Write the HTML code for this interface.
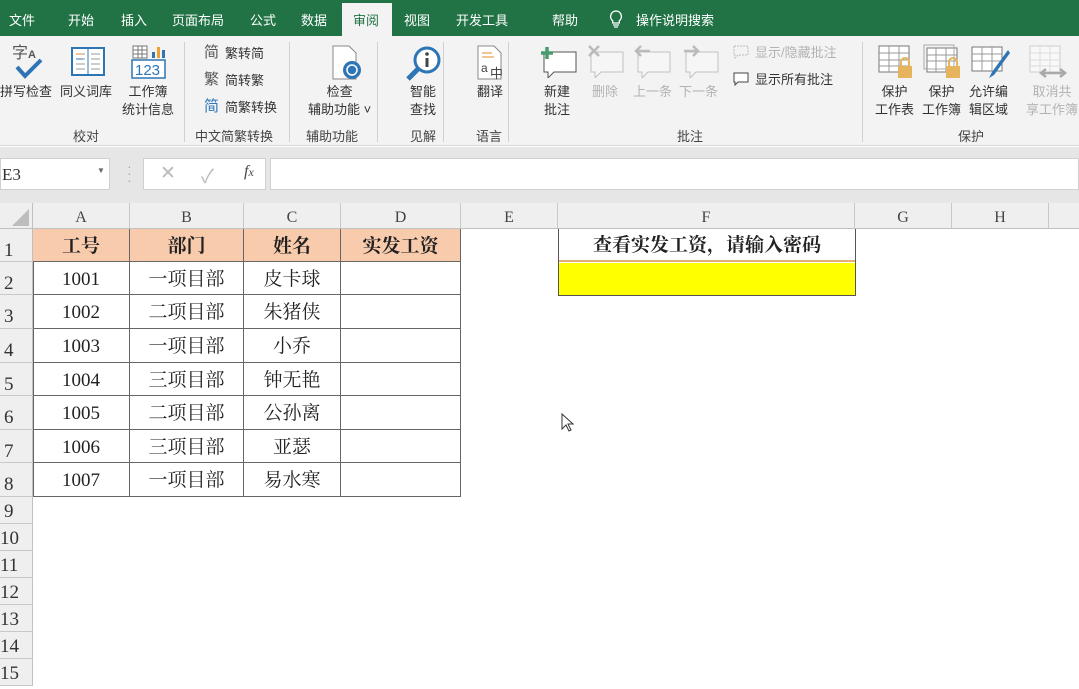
<!DOCTYPE html>
<html><head><meta charset="utf-8"><style>
*{margin:0;padding:0;box-sizing:border-box}
body{width:1079px;height:676px;overflow:hidden;background:#fff;position:relative;font-family:"Liberation Sans","Noto Sans CJK SC",sans-serif;font-size:13px;color:#262626}
.a{position:absolute}
.tab{position:absolute;top:10px;color:#fff;font-size:13px}
.rl{position:absolute;font-size:13px;color:#333;text-align:center;line-height:18px;white-space:nowrap}
.gl{position:absolute;top:126px;font-size:13px;color:#444}
.sep{position:absolute;top:42px;width:1px;height:100px;background:#d0d0d0}
.dis{color:#b3b3b3}
.ch{position:absolute;top:203px;height:26px;background:#efefef;border-right:1px solid #c8c8c8;border-bottom:1px solid #c0c0c0;text-align:center;line-height:30px;font-family:"Liberation Serif",serif;font-size:16px;color:#444}
.rh{position:absolute;left:0;width:33px;background:#efefef;border-bottom:1px solid #c8c8c8;border-right:1px solid #c0c0c0;font-family:"Liberation Serif",serif;font-size:19px;color:#333;padding-left:4px}
.c{position:absolute;text-align:center;font-family:"Liberation Serif","Noto Serif CJK SC",serif;font-size:19px;color:#222;border-right:1px solid #666;border-bottom:1px solid #666;padding-top:2px}
.h{background:#f8cbad;font-weight:bold}
</style></head><body>
<div class="a" style="left:0;top:0;width:1079px;height:36px;background:#217346"></div>
<div class="a" style="left:342px;top:3px;width:50px;height:34px;background:#f3f3f3"></div>
<div class="tab" style="left:9px">文件</div>
<div class="tab" style="left:68px">开始</div>
<div class="tab" style="left:121px">插入</div>
<div class="tab" style="left:172px">页面布局</div>
<div class="tab" style="left:250px">公式</div>
<div class="tab" style="left:301px">数据</div>
<div class="tab" style="left:353px;color:#217346">审阅</div>
<div class="tab" style="left:404px">视图</div>
<div class="tab" style="left:456px">开发工具</div>
<div class="tab" style="left:552px">帮助</div>
<svg class="a" style="left:608px;top:9px" width="16" height="20"><path d="M8 2a5.5 5.5 0 0 0-3.3 9.8V14h6.6v-2.2A5.5 5.5 0 0 0 8 2zM5 16h6M6 18h4" fill="none" stroke="#fff" stroke-width="1.3"/></svg>
<div class="tab" style="left:636px">操作说明搜索</div>
<div class="a" style="left:0;top:36px;width:1079px;height:110px;background:#f3f3f3;border-bottom:1px solid #d6d6d6"></div>
<!-- proofing -->
<div class="a" style="left:12px;top:39px;font-size:16px;color:#555">字<span style="font-size:11px;font-weight:bold">A</span></div>
<svg class="a" style="left:14px;top:57px" width="30" height="24"><path d="M3 10l8 9L27 3" fill="none" stroke="#2e75b6" stroke-width="4"/></svg>
<svg class="a" style="left:70px;top:46px" width="36" height="32"><rect x="2" y="2" width="32" height="27" fill="#fff" stroke="#2e75b6" stroke-width="2"/><line x1="18" y1="3" x2="18" y2="29" stroke="#2e75b6"/><path d="M6 8h9M6 13h9M6 18h9M6 23h9M21 8h9M21 13h9M21 18h9M21 23h9" stroke="#999"/><path d="M6 8h7" stroke="#e38b2b"/><path d="M6 13h7" stroke="#2e75b6"/></svg>
<svg class="a" style="left:130px;top:44px" width="38" height="36"><rect x="3" y="2" width="14" height="12" fill="#fff" stroke="#777"/><path d="M3 6h14M3 10h14M8 2v12M12 2v12" stroke="#777"/><rect x="22" y="8" width="3" height="6" fill="#2e75b6"/><rect x="27" y="3" width="3" height="11" fill="#f0a030"/><rect x="32" y="6" width="3" height="8" fill="#2e75b6"/><rect x="2" y="16" width="33" height="18" fill="#fff" stroke="#2e75b6" stroke-width="1.5"/><text x="5" y="31" font-size="15" fill="#2e75b6" font-family="Liberation Sans">123</text></svg>
<div class="rl" style="left:0;top:83px">拼写检查</div>
<div class="rl" style="left:60px;top:83px">同义词库</div>
<div class="rl" style="left:122px;top:83px">工作簿<br>统计信息</div>
<div class="gl" style="left:73px">校对</div>
<div class="sep" style="left:184px"></div>
<div class="rl" style="left:204px;top:44px;font-size:15px;color:#555">简</div>
<div class="rl" style="left:204px;top:71px;font-size:15px;color:#555">繁</div>
<div class="rl" style="left:204px;top:98px;font-size:15px;color:#2e75b6">简</div>
<div class="rl" style="left:225px;top:45px">繁转简</div>
<div class="rl" style="left:225px;top:72px">简转繁</div>
<div class="rl" style="left:225px;top:99px">简繁转换</div>
<div class="gl" style="left:195px">中文简繁转换</div>
<div class="sep" style="left:289px"></div>
<svg class="a" style="left:330px;top:44px" width="36" height="38"><path d="M3 2h16l7 7v26H3z" fill="#fff" stroke="#888"/><circle cx="22" cy="26" r="9" fill="#2e75b6"/><circle cx="22" cy="26" r="5" fill="none" stroke="#fff" stroke-width="1.5"/></svg>
<div class="rl" style="left:308px;top:83px">检查<br>辅助功能 ˅</div>
<div class="gl" style="left:306px">辅助功能</div>
<div class="sep" style="left:377px"></div>
<svg class="a" style="left:404px;top:44px" width="40" height="38"><circle cx="23" cy="16" r="12" fill="#fff" stroke="#2e75b6" stroke-width="3"/><path d="M14 25L4 35" stroke="#2e75b6" stroke-width="5"/><rect x="21.5" y="14" width="3" height="9" fill="#444"/><circle cx="23" cy="10" r="1.8" fill="#444"/></svg>
<div class="rl" style="left:410px;top:83px">智能<br>查找</div>
<div class="gl" style="left:410px">见解</div>
<div class="sep" style="left:443px"></div>
<svg class="a" style="left:475px;top:44px" width="36" height="38"><path d="M3 2h16l7 7v26H3z" fill="#fff" stroke="#888"/><path d="M7 9h10M7 13h12" stroke="#e38b2b"/><text x="6" y="28" font-size="12" fill="#444">a</text><text x="15" y="34" font-size="13" fill="#444" font-family="Noto Sans CJK SC">中</text></svg>
<div class="rl" style="left:477px;top:83px">翻译</div>
<div class="gl" style="left:476px">语言</div>
<div class="sep" style="left:508px"></div>
<!-- comments -->
<svg class="a" style="left:540px;top:44px" width="38" height="34"><path d="M4 8h32v20H14l-6 6v-6H4z" fill="#fff" stroke="#555"/><path d="M7 3v12M1 9h12" stroke="#4a9a70" stroke-width="3.5"/></svg>
<svg class="a" style="left:587px;top:44px" width="38" height="34"><path d="M4 8h32v20H14l-6 6v-6H4z" fill="#f6f6f6" stroke="#c0c0c0"/><path d="M2 2l10 10M12 2L2 12" stroke="#bbb" stroke-width="2.5"/></svg>
<svg class="a" style="left:634px;top:44px" width="38" height="34"><path d="M4 8h32v20H14l-6 6v-6H4z" fill="#f6f6f6" stroke="#c0c0c0"/><path d="M2 7h14M7 2L2 7l5 5" fill="none" stroke="#bbb" stroke-width="2.5"/></svg>
<svg class="a" style="left:682px;top:44px" width="38" height="34"><path d="M4 8h32v20H14l-6 6v-6H4z" fill="#f6f6f6" stroke="#c0c0c0"/><path d="M2 7h14M11 2l5 5-5 5" fill="none" stroke="#bbb" stroke-width="2.5"/></svg>
<div class="rl" style="left:544px;top:83px">新建<br>批注</div>
<div class="rl dis" style="left:592px;top:83px">删除</div>
<div class="rl dis" style="left:633px;top:83px">上一条</div>
<div class="rl dis" style="left:679px;top:83px">下一条</div>
<svg class="a" style="left:733px;top:45px" width="16" height="14"><path d="M1 1h14v9H5l-3 3v-3H1z" fill="none" stroke="#bbb" stroke-dasharray="2 1"/></svg>
<div class="rl dis" style="left:755px;top:44px">显示/隐藏批注</div>
<svg class="a" style="left:733px;top:72px" width="16" height="14"><path d="M1 1h14v9H5l-3 3v-3H1z" fill="#fff" stroke="#444"/></svg>
<div class="rl" style="left:755px;top:71px">显示所有批注</div>
<div class="gl" style="left:677px">批注</div>
<div class="sep" style="left:862px"></div>
<!-- protect -->
<svg class="a" style="left:876px;top:44px" width="44" height="38"><rect x="3" y="2" width="30" height="26" fill="#fff" stroke="#777"/><path d="M3 9h30M3 16h30M3 22h30M13 2v26M23 2v26" stroke="#999"/><rect x="22" y="22" width="14" height="12" fill="#e6b45c"/><path d="M25 22v-4a4 4 0 0 1 8 0v4" fill="none" stroke="#e6b45c" stroke-width="2"/></svg>
<svg class="a" style="left:922px;top:44px" width="44" height="38"><rect x="5" y="4" width="30" height="24" fill="#fff" stroke="#777"/><rect x="2" y="1" width="30" height="24" fill="none" stroke="#aaa"/><path d="M5 11h30M5 17h30M14 4v24M24 4v24" stroke="#999"/><rect x="24" y="22" width="14" height="12" fill="#e6b45c"/><path d="M27 22v-4a4 4 0 0 1 8 0v4" fill="none" stroke="#e6b45c" stroke-width="2"/></svg>
<svg class="a" style="left:970px;top:44px" width="44" height="38"><rect x="2" y="3" width="30" height="24" fill="#fff" stroke="#777"/><path d="M2 10h30M2 17h30M12 3v24M22 3v24" stroke="#999"/><path d="M38 6L22 28l-3 6 5-3 16-22z" fill="#2e75b6"/></svg>
<svg class="a" style="left:1026px;top:44px" width="44" height="38"><rect x="4" y="2" width="30" height="26" fill="#f8f8f8" stroke="#ccc"/><path d="M4 9h30M4 16h30M4 22h30M14 2v26M24 2v26" stroke="#ddd"/><path d="M16 29h22M20 25l-5 4 5 4M34 25l5 4-5 4" fill="none" stroke="#aaa" stroke-width="2.5"/></svg>
<div class="rl" style="left:875px;top:83px">保护<br>工作表</div>
<div class="rl" style="left:922px;top:83px">保护<br>工作簿</div>
<div class="rl" style="left:969px;top:83px">允许编<br>辑区域</div>
<div class="rl dis" style="left:1026px;top:83px">取消共<br>享工作簿</div>
<div class="gl" style="left:958px">保护</div>
<!-- formula bar -->
<div class="a" style="left:0;top:147px;width:1079px;height:56px;background:#e6e6e6"></div>
<div class="a" style="left:0;top:158px;width:110px;height:32px;background:#fff;border:1px solid #d0d0d0;font-family:'Liberation Serif',serif;font-size:17px;line-height:32px;padding-left:1px;color:#333">E3</div>
<div class="a" style="left:97px;top:166px;font-size:8px;color:#666">▼</div>
<div class="a" style="left:127px;top:163px;font-size:14px;color:#aaa;line-height:7px">·<br>·<br>·</div>
<div class="a" style="left:143px;top:158px;width:123px;height:32px;background:#fff;border:1px solid #d0d0d0"></div>
<div class="a" style="left:160px;top:162px;font-size:19px;color:#bbb">✕</div>
<div class="a" style="left:201px;top:162px;font-size:19px;color:#bbb">✓</div>
<div class="a" style="left:244px;top:163px;font-family:'Liberation Serif',serif;font-style:italic;font-size:16px;color:#444">f<span style="font-size:12px">x</span></div>
<div class="a" style="left:270px;top:158px;width:809px;height:32px;background:#fff;border:1px solid #d0d0d0"></div>
<!-- column headers -->
<div class="a" style="left:0;top:203px;width:33px;height:26px;background:#efefef;border-right:1px solid #c0c0c0;border-bottom:1px solid #c0c0c0"></div>
<svg class="a" style="left:10px;top:207px" width="20" height="20"><path d="M19 2V19H2z" fill="#bdbdbd"/></svg>
<div class="ch" style="left:33px;width:97px">A</div>
<div class="ch" style="left:130px;width:114px">B</div>
<div class="ch" style="left:244px;width:97px">C</div>
<div class="ch" style="left:341px;width:120px">D</div>
<div class="ch" style="left:461px;width:97px">E</div>
<div class="ch" style="left:558px;width:297px">F</div>
<div class="ch" style="left:855px;width:97px">G</div>
<div class="ch" style="left:952px;width:97px">H</div>
<div class="ch" style="left:1049px;width:40px"></div>
<!-- row headers -->
<div class="rh" style="top:229px;height:33px;line-height:44px">1</div>
<div class="rh" style="top:262px;height:33px;line-height:44px">2</div>
<div class="rh" style="top:295px;height:34px;line-height:44px">3</div>
<div class="rh" style="top:329px;height:34px;line-height:44px">4</div>
<div class="rh" style="top:363px;height:33px;line-height:44px">5</div>
<div class="rh" style="top:396px;height:34px;line-height:44px">6</div>
<div class="rh" style="top:430px;height:33px;line-height:44px">7</div>
<div class="rh" style="top:463px;height:34px;line-height:44px">8</div>
<div class="rh" style="top:497px;height:27px;line-height:30px">9</div>
<div class="rh" style="top:524px;height:27px;line-height:30px;padding-left:0">10</div>
<div class="rh" style="top:551px;height:27px;line-height:30px;padding-left:0">11</div>
<div class="rh" style="top:578px;height:27px;line-height:30px;padding-left:0">12</div>
<div class="rh" style="top:605px;height:27px;line-height:30px;padding-left:0">13</div>
<div class="rh" style="top:632px;height:27px;line-height:30px;padding-left:0">14</div>
<div class="rh" style="top:659px;height:27px;line-height:30px;padding-left:0">15</div>
<!-- table -->
<div class="a" style="left:33px;top:262px;width:1px;height:235px;background:#666"></div>
<div class="c h" style="left:33px;top:229px;width:97px;height:33px;line-height:31px">工号</div>
<div class="c h" style="left:130px;top:229px;width:114px;height:33px;line-height:31px">部门</div>
<div class="c h" style="left:244px;top:229px;width:97px;height:33px;line-height:31px">姓名</div>
<div class="c h" style="left:341px;top:229px;width:120px;height:33px;line-height:31px">实发工资</div>
<div class="c" style="left:33px;top:262px;width:97px;height:33px;line-height:31px">1001</div><div class="c" style="left:130px;top:262px;width:114px;height:33px;line-height:31px">一项目部</div><div class="c" style="left:244px;top:262px;width:97px;height:33px;line-height:31px">皮卡球</div><div class="c" style="left:341px;top:262px;width:120px;height:33px"></div>
<div class="c" style="left:33px;top:295px;width:97px;height:34px;line-height:32px">1002</div><div class="c" style="left:130px;top:295px;width:114px;height:34px;line-height:32px">二项目部</div><div class="c" style="left:244px;top:295px;width:97px;height:34px;line-height:32px">朱猪侠</div><div class="c" style="left:341px;top:295px;width:120px;height:34px"></div>
<div class="c" style="left:33px;top:329px;width:97px;height:34px;line-height:32px">1003</div><div class="c" style="left:130px;top:329px;width:114px;height:34px;line-height:32px">一项目部</div><div class="c" style="left:244px;top:329px;width:97px;height:34px;line-height:32px">小乔</div><div class="c" style="left:341px;top:329px;width:120px;height:34px"></div>
<div class="c" style="left:33px;top:363px;width:97px;height:33px;line-height:31px">1004</div><div class="c" style="left:130px;top:363px;width:114px;height:33px;line-height:31px">三项目部</div><div class="c" style="left:244px;top:363px;width:97px;height:33px;line-height:31px">钟无艳</div><div class="c" style="left:341px;top:363px;width:120px;height:33px"></div>
<div class="c" style="left:33px;top:396px;width:97px;height:34px;line-height:32px">1005</div><div class="c" style="left:130px;top:396px;width:114px;height:34px;line-height:32px">二项目部</div><div class="c" style="left:244px;top:396px;width:97px;height:34px;line-height:32px">公孙离</div><div class="c" style="left:341px;top:396px;width:120px;height:34px"></div>
<div class="c" style="left:33px;top:430px;width:97px;height:33px;line-height:31px">1006</div><div class="c" style="left:130px;top:430px;width:114px;height:33px;line-height:31px">三项目部</div><div class="c" style="left:244px;top:430px;width:97px;height:33px;line-height:31px">亚瑟</div><div class="c" style="left:341px;top:430px;width:120px;height:33px"></div>
<div class="c" style="left:33px;top:463px;width:97px;height:34px;line-height:32px">1007</div><div class="c" style="left:130px;top:463px;width:114px;height:34px;line-height:32px">一项目部</div><div class="c" style="left:244px;top:463px;width:97px;height:34px;line-height:32px">易水寒</div><div class="c" style="left:341px;top:463px;width:120px;height:34px"></div>
<!-- F box -->
<div class="a" style="left:558px;top:229px;width:298px;height:67px;border:1px solid #555;border-top:none"></div>
<div class="a" style="left:559px;top:229px;width:296px;height:33px;line-height:33px;text-align:center;font-family:'Liberation Serif','Noto Serif CJK SC',serif;font-size:19px;font-weight:bold;color:#222;border-bottom:2px solid #e0b070">查看实发工资，请输入密码</div>
<div class="a" style="left:559px;top:263px;width:296px;height:32px;background:#ffff00"></div>
<svg class="a" style="left:561px;top:413px" width="14" height="20"><path d="M1 1v15l4-4 3 6 2-1-3-6h5z" fill="#fff" stroke="#333"/></svg>
</body></html>
